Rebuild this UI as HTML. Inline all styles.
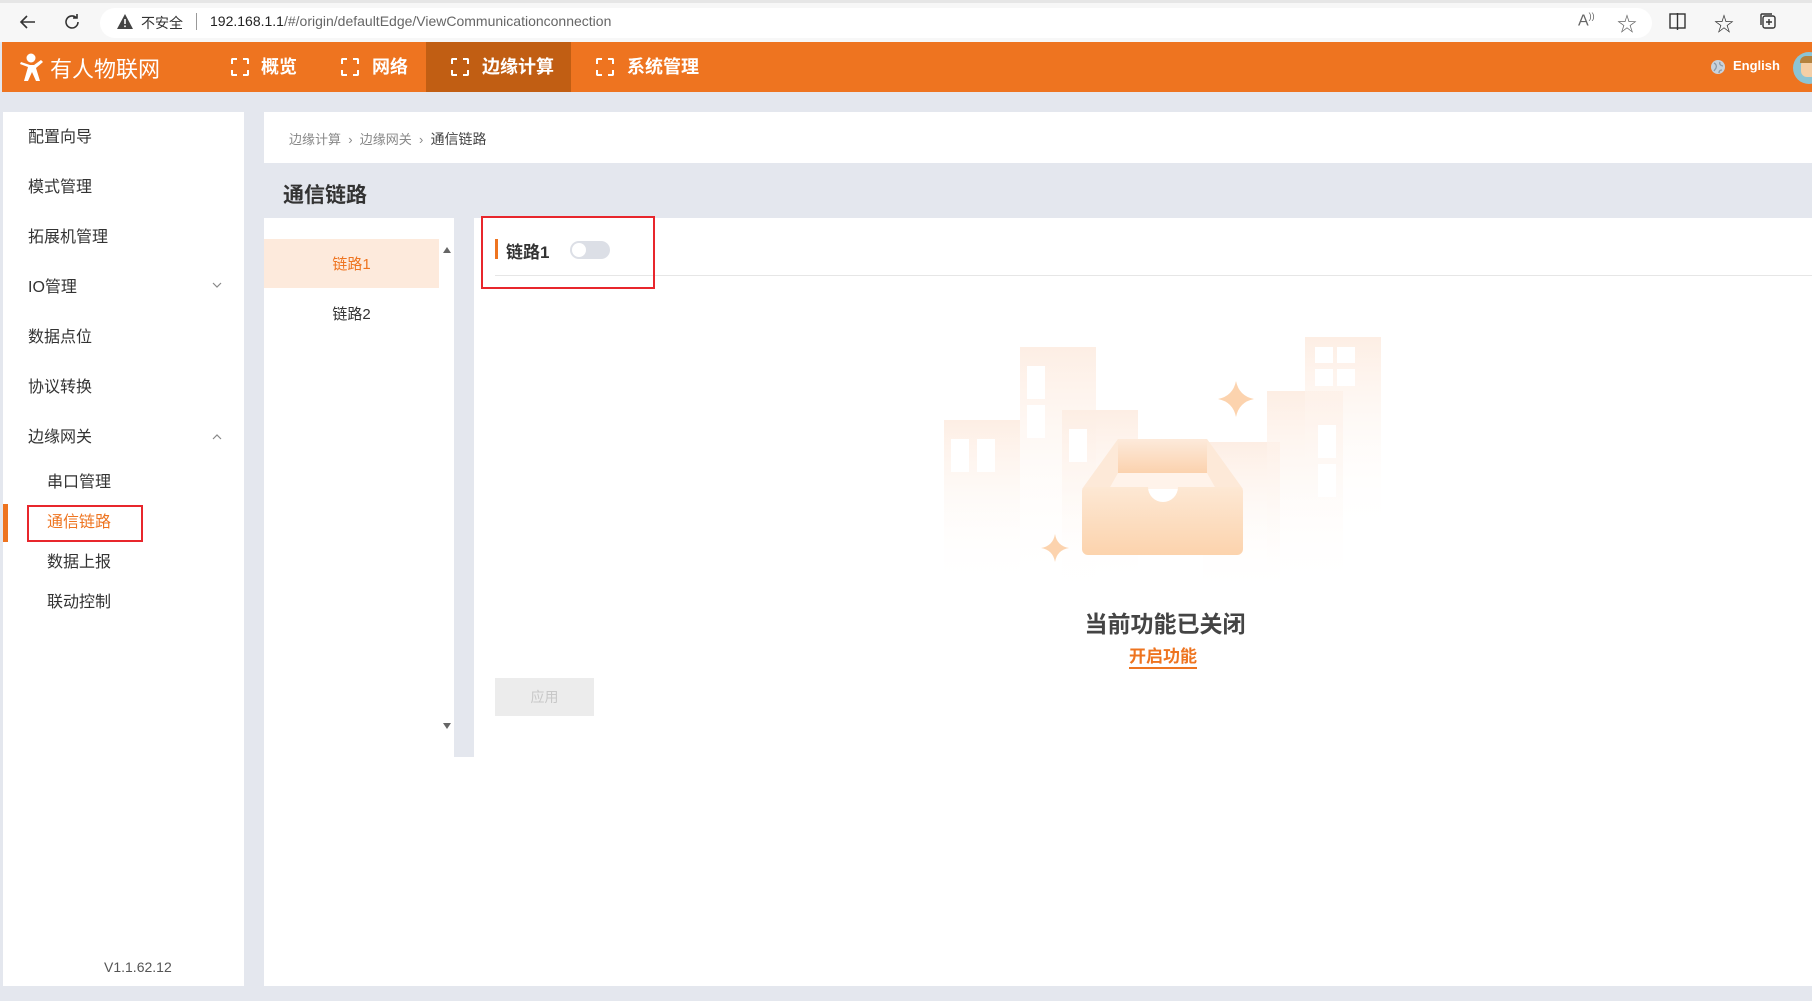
<!DOCTYPE html>
<html><head><meta charset="utf-8">
<style>
*{margin:0;padding:0;box-sizing:border-box}
body{width:1812px;height:1001px;overflow:hidden;background:#e4e7ee;font-family:"Liberation Sans","Noto Sans CJK SC",sans-serif;position:relative;color:#333}
.abs{position:absolute}
.chrome{left:0;top:0;width:1812px;height:42px;background:#f7f7f7;border-top:3px solid #e6e6e6}
.addr{left:100px;top:8px;width:1552px;height:30px;background:#fff;border-radius:15px}
.hdr{left:2px;top:42px;width:1810px;height:50px;background:#ee7420}
.nav{top:42px;height:50px;line-height:50px;color:#fff;font-weight:bold;font-size:18px}
.navic{width:18px;height:18px;border:2px dashed #fff;top:58px;border-radius:2px}
.side{left:3px;top:112px;width:241px;height:874px;background:#fff}
.mi{left:28px;font-size:16px;color:#333;line-height:20px}
.si{left:47px;font-size:16px;color:#333;line-height:20px}
.red{border:2px solid #e8262c}
</style></head><body>
<div class="abs chrome"></div>
<div class="abs addr"></div>
<svg class="abs" style="left:18px;top:12px" width="20" height="20" viewBox="0 0 20 20"><path d="M17 10H4M9 4L3 10l6 6" fill="none" stroke="#333" stroke-width="1.6"/></svg>
<svg class="abs" style="left:62px;top:12px" width="20" height="20" viewBox="0 0 20 20"><path d="M16 10a6 6 0 1 1-2-4.5M15 2v4h-4" fill="none" stroke="#333" stroke-width="1.6"/></svg>
<svg class="abs" style="left:117px;top:14px" width="16" height="15" viewBox="0 0 16 15"><path d="M8 0L16 15H0Z" fill="#444"/><rect x="7.2" y="5" width="1.6" height="5" fill="#fff"/><rect x="7.2" y="11.5" width="1.6" height="1.6" fill="#fff"/></svg>
<div class="abs" style="left:141px;top:13px;font-size:14px;color:#333">不安全</div>
<div class="abs" style="left:196px;top:13px;width:1px;height:17px;background:#999"></div>
<div class="abs" style="left:210px;top:13px;font-size:14px;color:#222">192.168.1.1<span style="color:#666">/#/origin/defaultEdge/ViewCommunicationconnection</span></div>
<div class="abs" style="left:1578px;top:11px;font-size:16px;color:#666">A<sup style="font-size:9px">))</sup></div>
<div class="abs" style="left:1617px;top:8px;font-size:20px;color:#666">☆</div>
<svg class="abs" style="left:1669px;top:13px" width="18" height="17"><rect x="1" y="1" width="15" height="14" fill="none" stroke="#333" stroke-width="1.4"/><line x1="8.5" y1="0" x2="8.5" y2="17" stroke="#333" stroke-width="1.4"/></svg>
<div class="abs" style="left:1714px;top:8px;font-size:20px;color:#333">☆</div>
<svg class="abs" style="left:1759px;top:12px" width="18" height="18"><rect x="4" y="4" width="12" height="12" rx="2" fill="none" stroke="#333" stroke-width="1.4"/><path d="M10 7v6M7 10h6" stroke="#333" stroke-width="1.4"/><path d="M2 13V3a1 1 0 0 1 1-1h10" fill="none" stroke="#333" stroke-width="1.4"/></svg>

<div class="abs hdr"></div>
<div class="abs" style="left:426px;top:42px;width:145px;height:50px;background:#c15e13"></div>
<svg class="abs" style="left:18px;top:52px" width="28" height="30" viewBox="0 0 28 30"><circle cx="13" cy="6" r="4.5" fill="#fff"/><path d="M2 12l8 3-4 14h4l4-9 4 9h4l-4-13 7-6-2-2-7 5h-4L3 10z" fill="#fff"/></svg>
<div class="abs" style="left:50px;top:52px;font-size:22px;color:#fff">有人物联网</div>
<div class="abs navic" style="left:231px"></div><div class="abs nav" style="left:261px">概览</div>
<div class="abs navic" style="left:341px"></div><div class="abs nav" style="left:372px">网络</div>
<div class="abs navic" style="left:451px"></div><div class="abs nav" style="left:482px">边缘计算</div>
<div class="abs navic" style="left:596px"></div><div class="abs nav" style="left:627px">系统管理</div>
<svg class="abs" style="left:1710px;top:59px" width="16" height="16"><circle cx="8" cy="8" r="7" fill="#c8d2dc"/><path d="M4 4c2 1 3 3 2 5l-2 3M10 3c-1 2 1 4 3 4M9 14c0-2 1-3 3-3" stroke="#8a9aa8" stroke-width="1.3" fill="none"/></svg>
<div class="abs" style="left:1733px;top:58px;font-size:13px;color:#fff;font-weight:bold">English</div>
<div class="abs" style="left:1793px;top:52px;width:32px;height:32px;border-radius:50%;background:#8cc4d4;overflow:hidden"><div style="position:absolute;left:8px;top:7px;width:16px;height:18px;background:#f5cfa6;border-radius:6px"></div><div style="position:absolute;left:7px;top:4px;width:18px;height:7px;background:#b4823e;border-radius:6px 6px 0 0"></div></div>

<div class="abs side"></div>
<div class="abs mi" style="top:128px">配置向导</div>
<div class="abs mi" style="top:178px">模式管理</div>
<div class="abs mi" style="top:228px">拓展机管理</div>
<div class="abs mi" style="top:278px">IO管理</div>
<div class="abs mi" style="top:328px">数据点位</div>
<div class="abs mi" style="top:378px">协议转换</div>
<div class="abs mi" style="top:428px">边缘网关</div>
<svg class="abs" style="left:212px;top:282px" width="10" height="7"><path d="M1 1l4 4 4-4" fill="none" stroke="#888" stroke-width="1.2"/></svg>
<svg class="abs" style="left:212px;top:433px" width="10" height="7"><path d="M1 6l4-4 4 4" fill="none" stroke="#888" stroke-width="1.2"/></svg>
<div class="abs si" style="top:473px">串口管理</div>
<div class="abs" style="left:3px;top:504px;width:5px;height:38px;background:#ee7420"></div>
<div class="abs red" style="left:27px;top:505px;width:116px;height:37px"></div>
<div class="abs si" style="top:513px;color:#ee7420">通信链路</div>
<div class="abs si" style="top:553px">数据上报</div>
<div class="abs si" style="top:593px">联动控制</div>
<div class="abs" style="left:104px;top:959px;font-size:14px;color:#555">V1.1.62.12</div>

<div class="abs" style="left:264px;top:112px;width:1548px;height:51px;background:#fff"></div>
<div class="abs" style="left:289px;top:129px;font-size:13px;color:#888">边缘计算 &nbsp;›&nbsp; 边缘网关 &nbsp;›&nbsp; <span style="color:#444;font-size:14px">通信链路</span></div>
<div class="abs" style="left:283px;top:179px;font-size:21px;font-weight:bold;color:#333">通信链路</div>

<div class="abs" style="left:264px;top:218px;width:1548px;height:768px;background:#fff"></div>
<div class="abs" style="left:454px;top:218px;width:20px;height:539px;background:#e4e7ee"></div>
<div class="abs" style="left:264px;top:239px;width:175px;height:49px;background:#fdeadc"></div>
<div class="abs" style="left:264px;top:253px;width:175px;text-align:center;font-size:15px;color:#ee7420">链路1</div>
<div class="abs" style="left:264px;top:303px;width:175px;text-align:center;font-size:15px;color:#333">链路2</div>
<svg class="abs" style="left:443px;top:247px" width="8" height="6"><path d="M0 6L4 0 8 6z" fill="#666"/></svg>
<svg class="abs" style="left:443px;top:723px" width="8" height="6"><path d="M0 0L4 6 8 0z" fill="#666"/></svg>

<div class="abs" style="left:495px;top:239px;width:3px;height:20px;background:#ee7420"></div>
<div class="abs" style="left:506px;top:238px;font-size:17px;font-weight:bold;color:#333">链路1</div>
<div class="abs" style="left:570px;top:241px;width:40px;height:18px;border-radius:9px;background:#dcdfe6"><div style="position:absolute;left:2px;top:2px;width:14px;height:14px;border-radius:50%;background:#fff"></div></div>
<div class="abs" style="left:495px;top:275px;width:1317px;height:1px;background:#e6e6e6"></div>
<div class="abs red" style="left:481px;top:216px;width:174px;height:73px"></div>

<svg class="abs" style="left:940px;top:335px" width="445" height="265" viewBox="940 335 445 265">
<defs>
<linearGradient id="b" x1="0" y1="0" x2="0" y2="1"><stop offset="0" stop-color="#fdeee4"/><stop offset="1" stop-color="#fff" stop-opacity="0"/></linearGradient>
<linearGradient id="bx" x1="0" y1="0" x2="0" y2="1"><stop offset="0" stop-color="#fde8d4"/><stop offset="1" stop-color="#fcd3ad"/></linearGradient>
<linearGradient id="bk" x1="0" y1="0" x2="0" y2="1"><stop offset="0" stop-color="#fdeadb"/><stop offset="1" stop-color="#fbd2ae"/></linearGradient>
</defs>
<rect x="944" y="420" width="76" height="170" fill="url(#b)"/>
<rect x="1020" y="347" width="76" height="240" fill="url(#b)"/>
<rect x="1062" y="410" width="76" height="180" fill="url(#b)"/>
<rect x="1203" y="442" width="77" height="155" fill="url(#b)"/>
<rect x="1267" y="391" width="76" height="200" fill="url(#b)"/>
<rect x="1305" y="337" width="76" height="200" fill="url(#b)"/>
<g fill="#fff"><rect x="951" y="439" width="18" height="33"/><rect x="977" y="439" width="18" height="33"/><rect x="1027" y="366" width="18" height="33"/><rect x="1027" y="405" width="18" height="33"/><rect x="1069" y="429" width="18" height="33"/><rect x="1318" y="425" width="18" height="33"/><rect x="1318" y="464" width="18" height="33"/><rect x="1315" y="347" width="18" height="16"/><rect x="1337" y="347" width="18" height="16"/><rect x="1315" y="369" width="18" height="17"/><rect x="1337" y="369" width="18" height="17"/></g>
<path d="M1118 439H1207L1243 489H1082Z" fill="#fde9d8"/>
<rect x="1118" y="439" width="89" height="34" fill="url(#bk)"/>
<path d="M1118 473H1207L1216 489H1109Z" fill="#fff3ea"/>
<path d="M1086 487H1148a15 15 0 0 0 30 0H1239a4 4 0 0 1 4 4V549a6 6 0 0 1-6 6H1088a6 6 0 0 1-6-6V491a4 4 0 0 1 4-4Z" fill="url(#bx)"/>
<path d="M1236 381Q1239 396 1254 399Q1239 402 1236 417Q1233 402 1218 399Q1233 396 1236 381Z" fill="#fcd3ae"/>
<path d="M1055 534Q1057 546 1069 548Q1057 550 1055 562Q1053 550 1041 548Q1053 546 1055 534Z" fill="#fcd3ae"/>
</svg>
<div class="abs" style="left:1000px;top:605px;width:330px;text-align:center;font-size:23px;font-weight:bold;color:#444">当前功能已关闭</div>
<div class="abs" style="left:1129px;top:647px;font-size:17px;font-weight:bold;color:#ee7420;border-bottom:2px solid #ee7420;line-height:20px">开启功能</div>
<div class="abs" style="left:495px;top:678px;width:99px;height:38px;background:#ececec;color:#c8c8c8;font-size:14px;text-align:center;line-height:38px">应用</div>
</body></html>
